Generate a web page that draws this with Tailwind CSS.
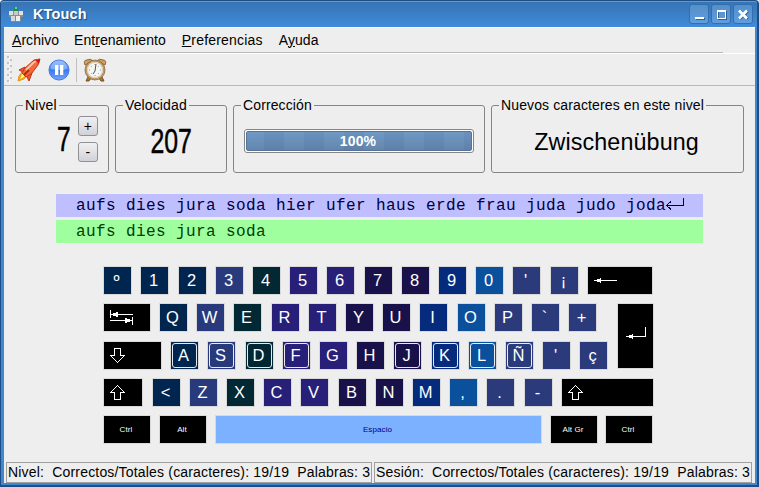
<!DOCTYPE html>
<html lang="es">
<head>
<meta charset="utf-8">
<title>KTouch</title>
<script src="https://cdn.jsdelivr.net/npm/@tailwindcss/browser@4"></script>
</head>
<body class="w-[759px] h-[487px] overflow-hidden bg-white font-['Liberation_Sans',Arial,sans-serif] text-[14px] leading-4 text-black">
<div class="w-[759px] h-[487px] flex flex-col rounded-t-[4px] border-t border-l border-r-2 border-b-2 border-[#1f4e84] bg-[#3d87d4] pl-[3px] pr-[2px] pb-[2px]">

  <header class="h-[26px] shrink-0 -ml-[3px] -mr-[2px] pl-1 pr-1 flex items-center rounded-t-[3px] border-t border-[#5a9be0] bg-linear-to-b from-[#3674b5] to-[#418bd9]">
    <svg class="ml-[3px]" width="16" height="17" viewBox="0 0 16 17" shape-rendering="crispEdges">
      <rect x="1" y="5" width="14" height="6" fill="#8c908c"/><rect x="3" y="10" width="10" height="6" fill="#858985"/>
      <rect x="1" y="5" width="4" height="4" fill="#dedede"/><rect x="6" y="5" width="4" height="4" fill="#c8cbc8"/><rect x="11" y="5" width="4" height="4" fill="#e2e2e2"/>
      <rect x="3" y="10" width="4" height="5" fill="#d8d8d8"/><rect x="8" y="10" width="4" height="5" fill="#eee"/>
      <circle cx="8" cy="3" r="2.5" fill="#149344"/><rect x="7" y="1" width="2" height="2" fill="#63da7c"/>
    </svg>
    <h1 class="ml-[9px] mb-[2px] text-[14.5px] tracking-[0.15px] font-bold text-white [text-shadow:1px_1px_1px_#184779]">KTouch</h1>
    <div class="ml-auto flex gap-[2px] mb-px">
      <div class="w-5 h-5 rounded-[3px] border border-[#326fae] bg-linear-to-b from-[#568fca] to-[#5f9ddd]"><svg width="18" height="18" shape-rendering="crispEdges"><path d="M6 14h9" stroke="#315f90" stroke-width="2"/><path d="M5 13h9" stroke="#fff" stroke-width="2"/></svg></div>
      <div class="w-5 h-5 rounded-[3px] border border-[#326fae] bg-linear-to-b from-[#568fca] to-[#5f9ddd]"><svg width="18" height="18" shape-rendering="crispEdges" fill="none"><path d="M6.500 6.500h8v8h-8z" stroke="#315f90"/><path d="M5.500 5.500h8v8h-8z" stroke="#fff"/><path d="M5 6h9" stroke="#fff" stroke-width="2"/></svg></div>
      <div class="w-5 h-5 rounded-[3px] border border-[#326fae] bg-linear-to-b from-[#568fca] to-[#5f9ddd]"><svg width="18" height="18" fill="none"><path d="M6 6l8 8M14 6l-8 8" stroke="#315f90" stroke-width="2.500"/><path d="M5 5.500l8 8M13 5.500l-8 8" stroke="#fff" stroke-width="2.600"/></svg></div>
    </div>
  </header>

  <main class="flex-1 min-h-0 flex flex-col bg-[#eeeeee] border-t border-white">
    <nav class="h-[26px] shrink-0 relative flex items-center pb-[2px] pl-2 gap-[15px] tracking-[0.05px] border-b border-white">
      <span><u>A</u>rchivo</span><span>Ent<u>r</u>enamiento</span><span class="ml-px tracking-[0.2px]"><u>P</u>referencias</span><span class="ml-px">A<u>y</u>uda</span>
      <i class="absolute left-0 bottom-0 w-[719px] h-px bg-[#b9bab9]"></i>
    </nav>

    <div class="h-[32px] shrink-0 flex items-center border-b border-[#b8b9b8]">
      <svg class="ml-[3px]" width="6" height="28" fill="#c4c4c4" shape-rendering="crispEdges"><path d="M0 0h2v2H0zM0 6h2v2H0zM0 12h2v2H0zM0 18h2v2H0zM0 24h2v2H0zM3 3h2v2H3zM3 9h2v2H3zM3 15h2v2H3zM3 21h2v2H3z"/><path fill="#fff" d="M2 1h1v2H2zM2 7h1v2H2zM2 13h1v2H2zM2 19h1v2H2zM2 25h1v2H2z"/></svg>
      <svg class="ml-[4px]" width="24" height="24" viewBox="0 0 24 24">
        <path d="M5 14l-3 4-1 5 6-2 3-3z" fill="#f4a21c" stroke="#e5952a"/><path d="M5 16l-2 5 4-2 1-2z" fill="#fff37c"/>
        <path d="M8 9L2 12l4 2zM15 15l-3 8-3-6z" fill="#ee5630" stroke="#be3514"/>
        <path d="M23 1l-6 1-9 8-3 5 4 4 6-4 6-8z" fill="#f26a39" stroke="#c63819"/>
        <path d="M21 2l-5 3-7 7" stroke="#ffc1a1" stroke-width="2" fill="none"/><path d="M23 1l-5 1 4 4z" fill="#d31714"/><path d="M12 12l-5 5" stroke="#b52b12" stroke-width="2"/>
      </svg>
      <svg class="ml-[6px]" width="24" height="24" viewBox="0 0 24 24">
        <defs><linearGradient id="pause" x2="0" y2="1"><stop stop-color="#84b1ff"/><stop offset=".5" stop-color="#397aee"/><stop offset="1" stop-color="#73a6ff"/></linearGradient></defs>
        <circle cx="12" cy="12" r="10.5" fill="#d6e4fc"/><circle cx="12" cy="12" r="10" fill="url(#pause)" stroke="#4a7bdc"/><path d="M3.5 11a8.5 8.5 0 0117 0q-8 2-17 0" fill="#a5c6ff" opacity=".6"/>
        <path d="M8 7h3.3v10H8zM13 7h3.3v10H13z" fill="#fff"/>
      </svg>
      <i class="ml-[5px] w-px h-6 bg-[#c0c0c0]"></i>
      <svg class="ml-[6px]" width="24" height="24" viewBox="0 0 24 24">
        <path d="M5 19l-2 4h3l2-3M19 19l2 4h-3l-2-3" fill="#a67838" stroke="#765025"/>
        <path d="M2 7q-2-5 2-5 4-2 6 1zM22 7q2-5-2-5-4-2-6 1z" fill="#d0a162" stroke="#8b673b"/>
        <circle cx="12" cy="12" r="9" fill="#f5f5f2" stroke="#c29a61" stroke-width="2"/><circle cx="12" cy="12" r="10" fill="none" stroke="#84602e" stroke-width=".7"/><circle cx="12" cy="12" r="7.5" fill="none" stroke="#d4d1ca"/>
        <path d="M12 6v1M12 17v1M6 12h1M17 12h1M8 8l.7.7M16 8l-.7.7M8 16l.7-.7M16 16l-.7-.7" stroke="#777" stroke-width=".8"/><path d="M13 6l-1 7-2 3" fill="none" stroke="#555"/>
      </svg>
    </div>

    <section class="mt-[19px] ml-[11px] h-[68px] shrink-0 flex gap-[6px] tracking-[0.12px]">
      <div class="relative w-[94px] rounded-[3px] border border-[#858585]">
        <span class="absolute left-[7px] -top-[9px] px-[2px] bg-[#eeeeee]">Nivel</span>
        <div class="h-full flex items-center justify-end pr-[10px]">
          <span class="block w-[14px] mr-[7px] mb-[1px] text-[35px] leading-[35px] tracking-normal scale-x-[.7] origin-left [-webkit-text-stroke:0.5px_black]">7</span>
          <div class="flex flex-col gap-[6px]">
            <button class="w-5 h-5 rounded-[3px] border border-[#909095] bg-linear-to-b from-[#f1f1f4] to-[#d1d1d9] leading-[16px]">+</button>
            <button class="w-5 h-5 rounded-[3px] border border-[#909095] bg-linear-to-b from-[#f1f1f4] to-[#d1d1d9] leading-[16px]">-</button>
          </div>
        </div>
      </div>
      <div class="relative w-[112px] rounded-[3px] border border-[#858585]">
        <span class="absolute left-[7px] -top-[9px] px-[2px] bg-[#eeeeee]">Velocidad</span>
        <div class="h-full flex items-center justify-center pt-[2px]"><span class="text-[35px] leading-[35px] tracking-normal scale-x-[.71] [-webkit-text-stroke:0.5px_black]">207</span></div>
      </div>
      <div class="relative w-[252px] rounded-[3px] border border-[#858585]">
        <span class="absolute left-[7px] -top-[9px] px-[2px] bg-[#eeeeee]">Corrección</span>
        <div class="mt-[23px] mx-[10px] h-6 rounded-[3px] border border-[#858585] bg-white p-px">
          <div class="h-full rounded-[2px] border border-[#567399] flex items-center justify-center pr-[2px] text-[14px] font-bold text-white bg-[repeating-linear-gradient(90deg,#ffffff00_0px,#ffffff00_17px,#284f8018_17px,#284f8018_37px,#ffffff00_37px,#ffffff00_40px),linear-gradient(#7099c4,#6486ad)]">100%</div>
        </div>
      </div>
      <div class="relative w-[253px] rounded-[3px] border border-[#858585]">
        <span class="absolute left-[7px] -top-[9px] px-[2px] bg-[#eeeeee] whitespace-nowrap">Nuevos caracteres en este nivel</span>
        <div class="h-full flex items-center justify-center pt-[5px] pr-[2px] text-[23.3px] leading-7">Zwischenübung</div>
      </div>
    </section>

    <section class="mt-[21px] ml-[52px] w-[647px] shrink-0 flex flex-col gap-[3px] font-['Liberation_Mono','Courier_New',monospace] text-[16px] tracking-[0.398px] leading-[25px] whitespace-pre">
      <div class="h-[23px] pl-5 flex bg-[#bfbfff] text-[#00003f]"><span>aufs dies jura soda hier ufer haus erde frau juda judo joda</span><svg width="20" height="23" fill="none" stroke="#00003f" shape-rendering="crispEdges"><path d="M17.5 4v7.5H0M5 7.5L.5 11.5l4.500 4"/></svg></div>
      <div class="h-[23px] pl-5 bg-[#9fff9f] text-[#003f00]">aufs dies jura soda</div>
    </section>

    <section id="keyboard" class="mt-[23px] ml-[99px] flex flex-col gap-[8px] shrink-0 text-white text-[16.5px]">
      <div class="flex" data-row="0"></div>
      <div class="flex">
        <div class="w-[514px] flex flex-col gap-[9px]"><div class="flex" data-row="1"></div><div class="flex" data-row="2"></div></div>
        <div class="w-[37px] h-[66px] border border-[#d9d9d9] bg-black"><svg width="35" height="64" fill="none" stroke="#fff" shape-rendering="crispEdges"><path d="M27.500 23v9.500H8M14.500 30v5M11 31.500h4M11 33.500h4"/></svg></div>
      </div>
      <div class="flex" data-row="3"></div>
      <div class="flex" data-row="4"></div>
    </section>

    <footer class="mt-auto h-[21px] shrink-0 ml-[2px] mb-0 flex gap-[2px] whitespace-pre leading-[19px] tracking-[0.18px]">
      <div class="w-[366px] border border-[#a0a0a0] pl-px">Nivel:  Correctos/Totales (caracteres): 19/19  Palabras: 3</div>
      <div class="w-[378px] border border-[#a0a0a0] pl-px">Sesión:  Correctos/Totales (caracteres): 19/19  Palabras: 3</div>
    </footer>
  </main>
</div>

<script>
const fingers = {
  a: 'bg-[#00264f]', b: 'bg-[#283a7c]', c: 'bg-[#022833]', d: 'bg-[#281f78]',
  e: 'bg-[#19124a]', f: 'bg-[#062b7c]', g: 'bg-[#0a509c]', h: 'bg-[#2a3a7a]', k: 'bg-black'
};
const icons = {
  back: '<path d="M6 13.500h23M9 12.500h4M9 14.500h4M12 11.500h1M12 15.500h1"/>',
  tab: '<path d="M6.500 6v8M7 10.500h22M9 9.500h5M9 11.500h5M12 8.500h2M12 12.500h2M6 16.500h22M21 15.500h5M21 17.500h5M21 14.500h2M21 18.500h2M28.500 13v8"/>',
  caps: '<path d="M10.500 6.500h6v7h4L13.500 20.500l-7-7h4z"/>',
  shift: '<path d="M10.500 20.500h6v-7h4L13.500 6.500l-7 7h4z"/>'
};
// Each key: [label, finger, left edge, width, home-row flag]
const rows = [
  [['º','a',104],['1','a',141],['2','a',179],['3','b',216],['4','c',253],['5','d',290],['6','d',327],['7','e',365],['8','e',402],['9','f',439],['0','g',476],["'",'h',513],['¡','h',551],['back','k',588,64]],
  [['tab','k',104,46],['Q','a',160],['W','b',197],['E','c',234],['R','d',272],['T','d',309],['Y','e',346],['U','e',383],['I','f',420],['O','g',458],['P','h',495],['`','h',532],['+','h',569]],
  [['caps','k',104,57],['A','a',171,27,1],['S','b',208,27,1],['D','c',246,27,1],['F','d',283,27,1],['G','d',320],['H','e',357],['J','e',394,27,1],['K','f',432,27,1],['L','g',469,27,1],['Ñ','h',506,27,1],["'",'h',543],['ç','h',580]],
  [['shift','k',104,38],['&lt;','a',153],['Z','b',190],['X','c',227],['C','d',264],['V','d',301],['B','e',339],['N','e',376],['M','f',413],[',','g',450],['.','h',487],['-','h',525],['shift','k',562,91]],
  [['Ctrl','k',104,46],['Alt','k',160,46],['Espacio','s',216,325],['Alt Gr','k',551,46],['Ctrl','k',606,46]]
];
rows.forEach((keys, r) => {
  let edge = 103;
  document.querySelector('[data-row="' + r + '"]').innerHTML = keys.map(([label, finger, x, w = 27, home]) => {
    const gap = x - 1 - edge;
    edge = x + w + 1;
    const color = finger === 's' ? 'bg-[#7cb1ff] text-[#000080]' : fingers[finger];
    let body;
    if (icons[label]) body = '<svg width="32" height="27" fill="none" stroke="#fff" shape-rendering="crispEdges">' + icons[label] + '</svg>';
    else if (r === 4) body = '<span class="w-full pr-[2px] text-center text-[8px] leading-[27px] tracking-[0.1px]">' + label + '</span>';
    else if (home) body = '<span class="m-px w-[25px] h-[25px] rounded-[3px] border border-white/90 text-center leading-[22px] pr-[2px]">' + label + '</span>';
    else body = '<span class="w-full text-center leading-[26px] pr-[2px]">' + label + '</span>';
    return '<div class="h-[29px] shrink-0 flex overflow-hidden border border-[#d9d9d9] ' + color + '" style="width:' + (w + 2) + 'px;margin-left:' + gap + 'px">' + body + '</div>';
  }).join('');
});
</script>
</body>
</html>
